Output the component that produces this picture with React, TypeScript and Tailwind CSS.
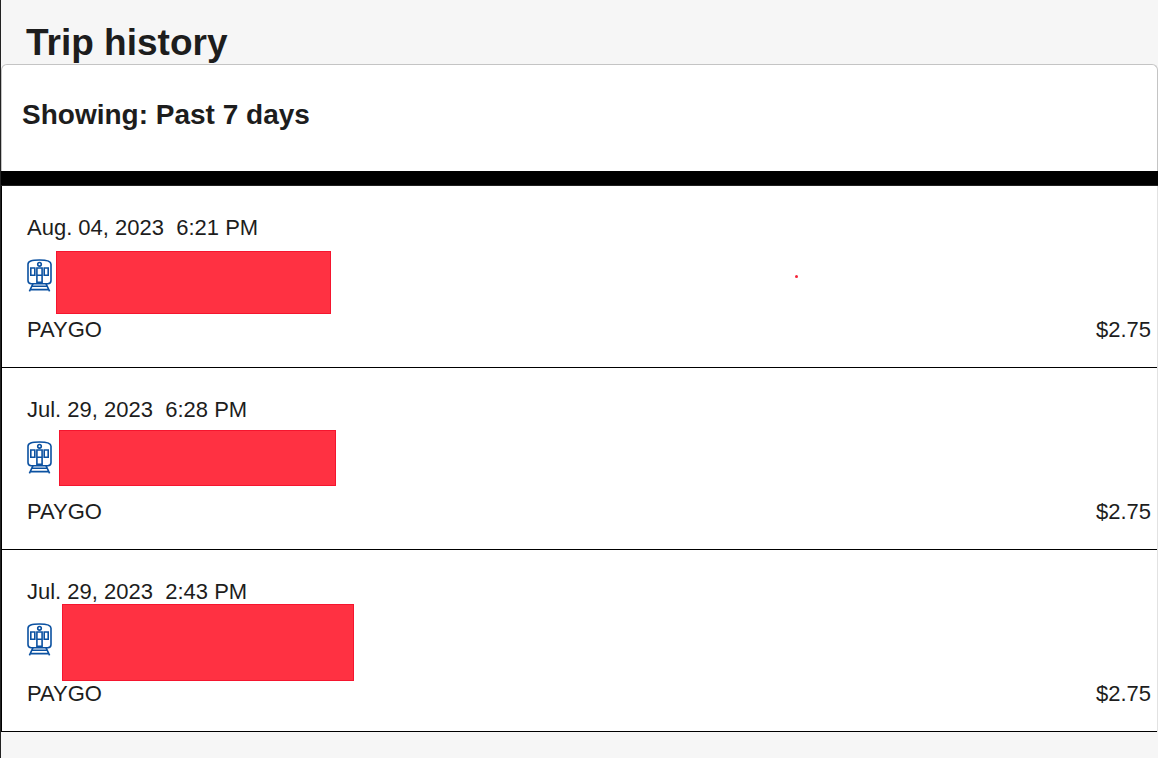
type Trip = {
  id: number;
  date: string;
  time: string;
  fare: string;
  pass: string;
  mask: string;
};

const trips: Trip[] = [
  {
    id: 1,
    date: "Aug. 04, 2023",
    time: "6:21 PM",
    fare: "$2.75",
    pass: "PAYGO",
    mask: "left-[54px] top-[65px] w-[275px] h-[63px]",
  },
  {
    id: 2,
    date: "Jul. 29, 2023",
    time: "6:28 PM",
    fare: "$2.75",
    pass: "PAYGO",
    mask: "left-[57px] top-[62px] w-[277px] h-[56px]",
  },
  {
    id: 3,
    date: "Jul. 29, 2023",
    time: "2:43 PM",
    fare: "$2.75",
    pass: "PAYGO",
    mask: "left-[60px] top-[54px] w-[292px] h-[77px]",
  },
];

export default function App() {
  return (
    <main className="min-h-screen border-l border-[#222222] bg-[#f6f6f6] font-['Liberation_Sans',Arial,sans-serif] text-[#1d1d1d]">
      <h1 className="px-[25px] pt-[21px] text-[37px] leading-[43px] font-bold">Trip history</h1>

      <section className="rounded-t-md border border-b-0 border-[#c4c4c4] bg-white px-5 pt-[33px] pb-[39px]">
        <h2 className="text-[28px] leading-[34px] font-bold">Showing: Past 7 days</h2>
      </section>

      <div className="h-[15px] border-b border-[#222222] bg-black" />

      <ul className="border-r border-l border-r-[#e2e2e2] border-l-black bg-white">
        {trips.map((trip) => (
          <TripRow key={trip.id} trip={trip} />
        ))}
      </ul>
    </main>
  );
}

const TripRow = ({ trip }: { trip: Trip }) => (
  <li className="relative border-b border-black pt-7 pr-1.5 pb-[23px] pl-[25px] text-[22px] leading-7">
    <p className="whitespace-pre">
      {trip.date}
      {"  "}
      {trip.time}
    </p>
    <div className="flex h-[74px] items-start pt-[17px]">
      <TrainIcon />
    </div>
    <div className="flex justify-between">
      <span>{trip.pass}</span>
      <span>{trip.fare}</span>
    </div>

    {/* station name is hidden */}
    <div className={`absolute border border-[#f5152e] bg-[#ff3142] ${trip.mask}`} />
    {trip.id === 1 && (
      <span className="absolute top-[89px] left-[793px] size-[3px] rounded-full bg-[#f5253a]" />
    )}
  </li>
);

const TrainIcon = () => (
  <svg
    width="25"
    height="33"
    viewBox="0 0 25 33"
    fill="none"
    stroke="#0b51a1"
    strokeWidth="1.6"
    aria-hidden="true"
  >
    <path d="M1 21.5V5.2C1 2.2 4.5 1 12.5 1S24 2.2 24 5.2V21.5C24 23.8 22.8 24.7 20.8 24.7H4.2C2.2 24.7 1 23.8 1 21.5Z" />
    <circle cx="12.5" cy="5.3" r="1.8" />
    <path d="M3.8 9H7.8V16.2H3.8ZM17.2 9H21.2V16.2H17.2Z" />
    <path d="M9.9 9H15.1V23.2H9.9ZM9.9 16.2H15.1" />
    <path d="M6 24.7L2.4 32.4M19 24.7L22.6 32.4M5 27.2H20M3.4 30.6H21.6" />
  </svg>
);
